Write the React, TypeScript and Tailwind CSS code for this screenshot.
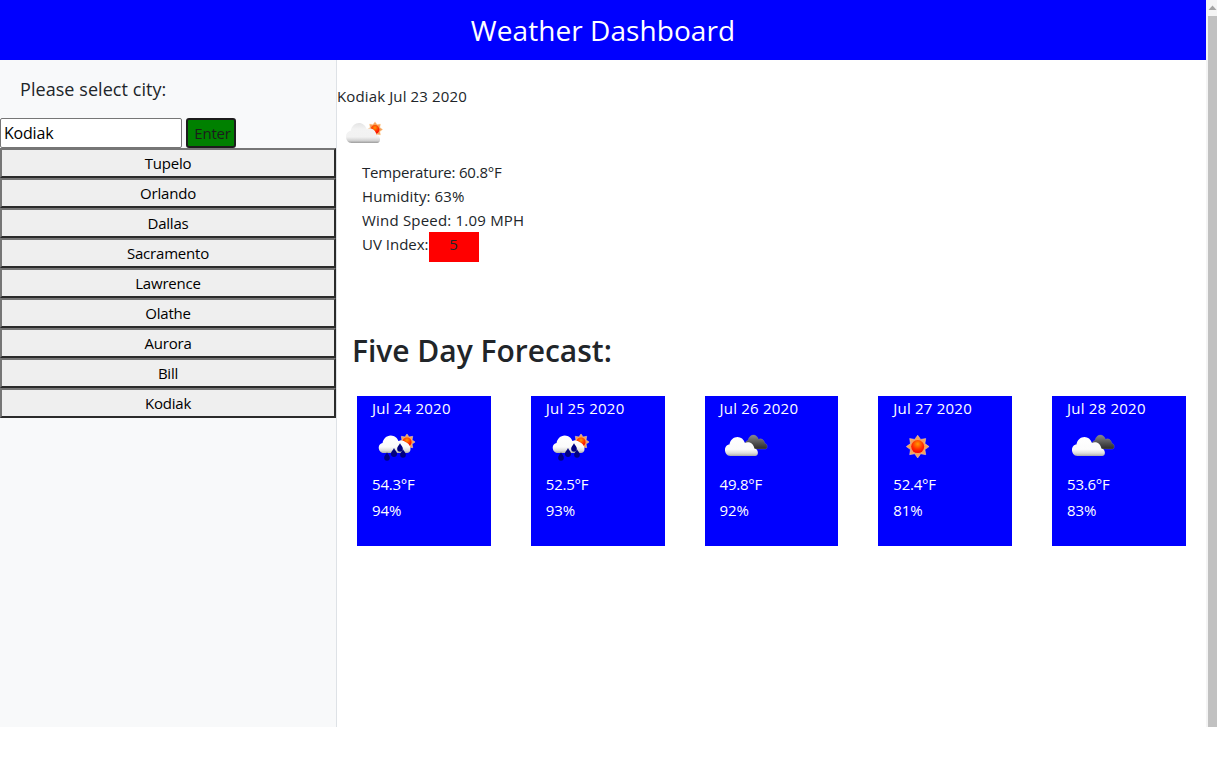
import React from "react";

const font = { fontFamily: '"Open Sans", "Noto Sans", sans-serif' };

function Defs() {
  return (
    <svg width="0" height="0" className="absolute">
      <defs>
        <linearGradient id="cloudW" x1="0" y1="0" x2="0" y2="1">
          <stop offset="0" stopColor="#ffffff" />
          <stop offset="0.65" stopColor="#fbfbfb" />
          <stop offset="0.85" stopColor="#dcdcdc" />
          <stop offset="1" stopColor="#a9a9a9" />
        </linearGradient>
        <linearGradient id="cloudP" x1="0" y1="0" x2="0" y2="1">
          <stop offset="0" stopColor="#e4e4e4" />
          <stop offset="0.3" stopColor="#f3f3f3" />
          <stop offset="0.7" stopColor="#f2f2f2" />
          <stop offset="0.88" stopColor="#d2d2d2" />
          <stop offset="1" stopColor="#9d9d9d" />
        </linearGradient>
        <linearGradient id="cloudD" x1="0" y1="0" x2="0" y2="1">
          <stop offset="0" stopColor="#8a8a8a" />
          <stop offset="0.6" stopColor="#4e4e4e" />
          <stop offset="1" stopColor="#2a2a2a" />
        </linearGradient>
        <radialGradient id="sunC" cx="0.5" cy="0.3" r="0.7">
          <stop offset="0" stopColor="#ff9a00" />
          <stop offset="0.6" stopColor="#ff2a00" />
          <stop offset="1" stopColor="#f80000" />
        </radialGradient>
      </defs>
    </svg>
  );
}

function Sun({ cx, cy, r, k = 1.75 }: { cx: number; cy: number; r: number; k?: number }) {
  const pts: string[] = [];
  for (let i = 0; i < 16; i++) {
    const a = (i * Math.PI) / 8;
    const d = i % 2 === 0 ? r * k : r * 1.2;
    pts.push(`${cx + d * Math.cos(a)},${cy + d * Math.sin(a)}`);
  }
  return (
    <g>
      <polygon points={pts.join(" ")} fill="#f5a05a" stroke="#ffd9a8" strokeWidth="0.5" />
      <circle cx={cx} cy={cy} r={r} fill="url(#sunC)" />
    </g>
  );
}

const CLOUD = "M8 36 C4 36 2 33 2 30.5 C2 27.5 4.5 25.5 7 25.5 C8 21 12 18.5 16 18.5 C20 18.5 23 20.5 24.5 24 C26 23 30 23 32 24.5 C34 26 35 28 35 29 C37.5 29 39 31 39 33 C39 35 37.5 36 36 36 Z";

function Drop({ x, y, s = 1 }: { x: number; y: number; s?: number }) {
  return (
    <path
      d={`M${x} ${y - 3.6 * s} C${x + 0.8 * s} ${y - 1.8 * s} ${x + 2.2 * s} ${y - 1 * s} ${x + 2.2 * s} ${y + 0.6 * s} A${2.2 * s} ${2.2 * s} 0 1 1 ${x - 2.2 * s} ${y + 0.6 * s} C${x - 2.2 * s} ${y - 1 * s} ${x - 0.8 * s} ${y - 1.8 * s} ${x} ${y - 3.6 * s} Z`}
      fill="#000080"
    />
  );
}

function Icon({ kind }: { kind: "partly" | "rain" | "clouds" | "sun" }) {
  return (
    <svg width="50" height="50" viewBox="0 0 50 50" className="block">
      {kind === "partly" && (
        <g>
          <Sun cx={37} cy={21.5} r={4.4} />
          <g transform="translate(6.2 -6.1) scale(0.92 1.14)">
            <path d={CLOUD} fill="url(#cloudP)" />
          </g>
        </g>
      )}
      {kind === "rain" && (
        <g>
          <Sun cx={35} cy={21} r={4.6} />
          <g transform="translate(5 0.5) scale(0.86 0.93)">
            <path d="M8 34 C4 34 2 31 2 28 C2 25 4 23.5 6.5 23 C7 19 11 15 16 15 C20.5 15 24 18 24.8 21 C26 20 30 20 33 22 C36 23 39 26 39 29.5 C39 32 37 34 35 34 Z" fill="url(#cloudW)" />
          </g>
          <Drop x={15} y={36} s={1.3} />
          <Drop x={22} y={32} s={1.4} />
          <Drop x={28} y={27} s={1.3} />
          <Drop x={31} y={33} s={1.3} />
        </g>
      )}
      {kind === "clouds" && (
        <g>
          <g transform="translate(23.8 -0.8) scale(0.6 0.8)">
            <path d={CLOUD} fill="url(#cloudD)" stroke="#9a9a9a" strokeWidth="0.4" />
          </g>
          <g transform="translate(3.2 -4.2) scale(0.89 1.09)">
            <path d={CLOUD} fill="url(#cloudW)" />
          </g>
        </g>
      )}
      {kind === "sun" && <Sun cx={24.7} cy={25.6} r={6.5} />}
    </svg>
  );
}

const cities = ["Tupelo", "Orlando", "Dallas", "Sacramento", "Lawrence", "Olathe", "Aurora", "Bill", "Kodiak"];

const days: { date: string; temp: string; hum: string; kind: "rain" | "clouds" | "sun" }[] = [
  { date: "Jul 24 2020", temp: "54.3°F", hum: "94%", kind: "rain" },
  { date: "Jul 25 2020", temp: "52.5°F", hum: "93%", kind: "rain" },
  { date: "Jul 26 2020", temp: "49.8°F", hum: "92%", kind: "clouds" },
  { date: "Jul 27 2020", temp: "52.4°F", hum: "81%", kind: "sun" },
  { date: "Jul 28 2020", temp: "53.6°F", hum: "83%", kind: "clouds" },
];

export default function App() {
  return (
    <div className="flex w-[1217px] h-[768px] overflow-hidden bg-white text-[#212529] text-[15px]" style={font}>
      <Defs />
      <div className="w-[1206px] flex flex-col">
        <header className="h-[60px] bg-[#0000ff] text-white flex items-center justify-center text-[28px] tracking-[0.07px]">
          Weather Dashboard
        </header>
        <div className="flex h-[667px]">
          <aside className="w-[337px] border-r border-[#dee2e6] bg-[#f8f9fa] flex flex-col">
            <div className="pt-[16px] pl-[20px] h-[58px] text-[18px] leading-[27px] tracking-[0.06px]">Please select city:</div>
            <div className="flex gap-[4px] h-[30px]">
              <input
                readOnly
                value="Kodiak"
                className="w-[182px] h-[30px] bg-white border border-[#767676] rounded-[2px] px-[3px] text-[16px] text-black outline-none tracking-[-0.2px]"
              />
              <button className="w-[50px] h-[30px] pl-[3px] bg-[#008000] border-2 border-[#1c1c1c] rounded-[3px] text-[15px] text-[#1c1c1c] leading-none tracking-[-0.2px]">
                Enter
              </button>
            </div>
            {cities.map((c) => (
              <button
                key={c}
                className="w-[336px] h-[30px] bg-[#efefef] border-2 border-t-[#767676] border-l-[#767676] border-b-[#2b2b2b] border-r-[#2b2b2b] text-[15px] text-black leading-none tracking-[-0.2px]"
              >
                {c}
              </button>
            ))}
          </aside>
          <main className="flex-1 flex flex-col">
            <div className="pt-[24px] h-[48px] leading-[24px] tracking-[0.13px]">Kodiak Jul 23 2020</div>
            <div className="pl-px h-[50px]">
              <Icon kind="partly" />
            </div>
            <div className="pl-[25px] pt-[2px] leading-[24px]">
              <p className="tracking-[-0.2px]">Temperature: 60.8°F</p>
              <p className="tracking-[0.1px]">Humidity: 63%</p>
              <p className="tracking-[0.2px]">Wind Speed: 1.09 MPH</p>
              <p className="flex">
                UV Index:
                <span className="w-[50px] h-[30px] bg-[#ff0000] flex justify-center leading-[24px]">5</span>
              </p>
            </div>
            <h2 className="mt-[70px] ml-[15px] text-[30px] leading-[38px] font-semibold tracking-[-0.02px]">Five Day Forecast:</h2>
            <div className="flex gap-[40px] pl-[20px] mt-[26px]">
              {days.map((d) => (
                <div key={d.date} className="w-[133.75px] h-[150px] bg-[#0000ff] text-white pl-[15px] shrink-0">
                  <div className="leading-[24px] tracking-[0.22px]">{d.date}</div>
                  <div className="h-[50px] mt-[1px]">
                    <Icon kind={d.kind} />
                  </div>
                  <div className="leading-[24px] mt-[1px] tracking-[-0.2px]">{d.temp}</div>
                  <div className="leading-[24px] mt-[2px] tracking-[-0.1px]">{d.hum}</div>
                </div>
              ))}
            </div>
          </main>
        </div>
      </div>
      <div className="w-[11px] h-[727px] bg-[#f4f4f4] flex flex-col pl-[2px]">
        <div className="h-[16px] flex items-center justify-center">
          <svg width="9" height="6" viewBox="0 0 9 6" className="block">
            <path d="M4.5 0.5 L8.5 5 L0.5 5 Z" fill="#a3a3a3" />
          </svg>
        </div>
        <div className="flex-1 bg-[#c1c1c1]" />
      </div>
    </div>
  );
}
